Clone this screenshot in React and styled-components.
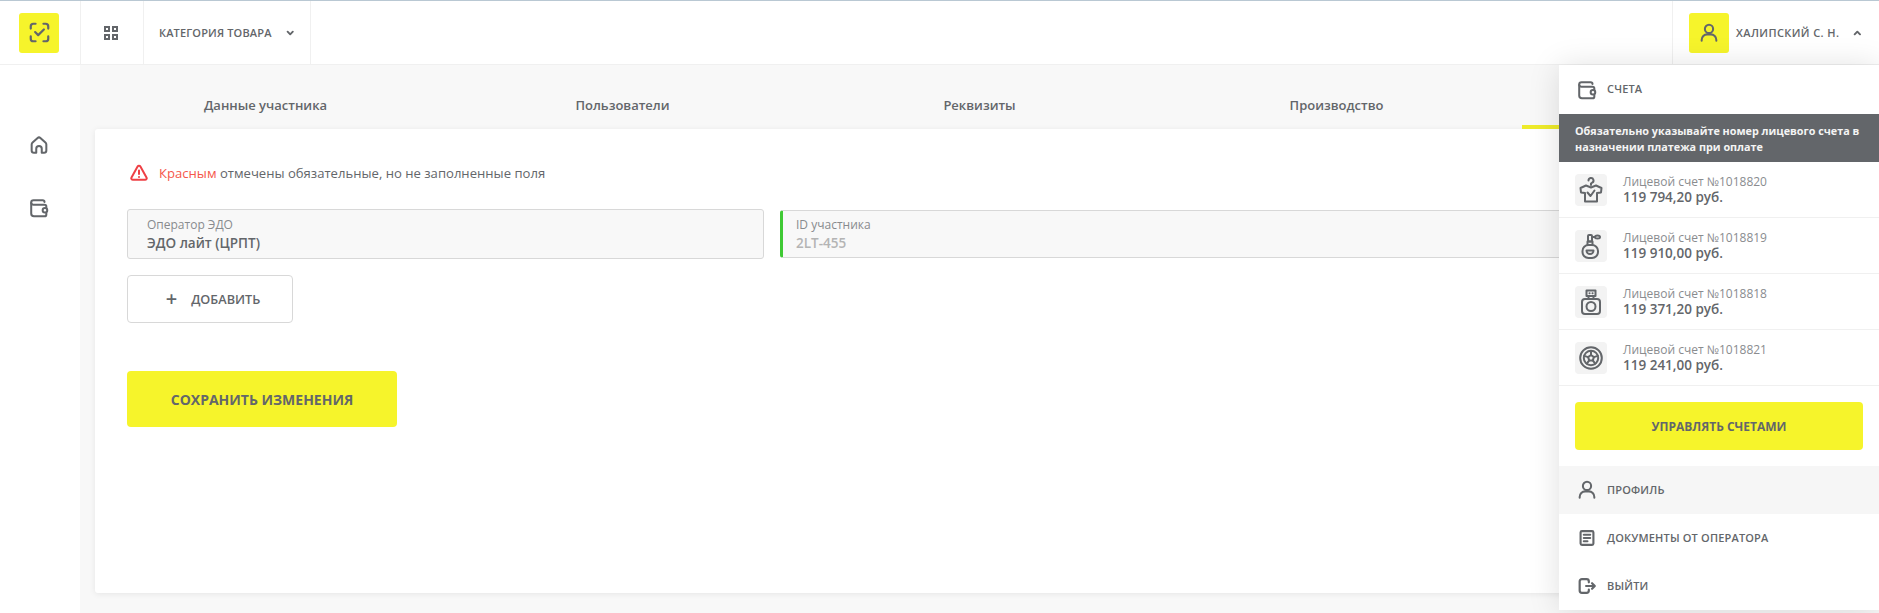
import React from 'react'
import styled, { createGlobalStyle } from 'styled-components'

const GREY = '#63666a'
const YELLOW = '#f6f42b'

const GlobalStyle = createGlobalStyle`
  html, body {
    margin: 0;
    padding: 0;
    height: 100%;
    overflow: hidden;
    background: #f8f8f8;
    font-family: 'Open Sans', 'Noto Sans', sans-serif;
    color: ${GREY};
  }
  * { box-sizing: border-box; }
`

const Svg = ({ size = 22, children, ...rest }) => (
  <svg
    width={size}
    height={size}
    viewBox="0 0 24 24"
    fill="none"
    stroke={GREY}
    strokeWidth="2.2"
    strokeLinecap="round"
    strokeLinejoin="round"
    {...rest}
  >
    {children}
  </svg>
)

const TileSvg = ({ children }) => (
  <Svg size={28} viewBox="0 0 28 28" strokeWidth="2">
    {children}
  </Svg>
)

const LogoIcon = () => (
  <Svg size={21} strokeWidth="2.5">
    <path d="M2 7.500V5a3 3 0 0 1 3-3h2.500M16.500 2H19a3 3 0 0 1 3 3v2.500M22 16.500V19a3 3 0 0 1-3 3h-2.500M7.500 22H5a3 3 0 0 1-3-3v-2.500" />
    <path d="M7 11.500l3.500 3.500L17 8.500" />
  </Svg>
)
const GridIcon = () => (
  <Svg size={16} viewBox="0 0 16 16" strokeWidth="2" strokeLinecap="square" strokeLinejoin="miter">
    <rect x="2" y="2" width="4" height="4" />
    <rect x="10" y="2" width="4" height="4" />
    <rect x="2" y="10" width="4" height="4" />
    <rect x="10" y="10" width="4" height="4" />
  </Svg>
)
const Chevron = ({ up }) => (
  <Svg size={12} viewBox="0 0 12 12" strokeWidth="2.2">
    <path d={up ? 'M3 7.500L6 4.500l3 3' : 'M3 4.500L6 7.500l3-3'} />
  </Svg>
)
const HomeIcon = () => (
  <Svg>
    <path d="M9 20.500H6.500a2.500 2.500 0 0 1-2.500-2.500v-6.500a3 3 0 0 1 1-2.200l5.500-5a2.300 2.300 0 0 1 3 0l5.500 5a3 3 0 0 1 1 2.200V18a2.500 2.500 0 0 1-2.500 2.500H15V16a3 3 0 0 0-6 0z" />
  </Svg>
)
const WalletIcon = () => (
  <Svg>
    <path d="M18 5.500V5.500a2 2 0 0 0-2-2H6a2.500 2.500 0 0 0-2.500 2.500V18A3 3 0 0 0 6.500 21H18a2 2 0 0 0 2-2v-1.500" />
    <path d="M3.500 6.500A2.500 2.500 0 0 0 6 8.500h12a2 2 0 0 1 2 2v1" />
    <circle cx="18.500" cy="14.500" r="2.500" />
  </Svg>
)
const UserIcon = () => (
  <Svg>
    <circle cx="12" cy="7.500" r="4.500" />
    <path d="M4 20.500v-1a6 6 0 0 1 6-6h4a6 6 0 0 1 6 6v1" />
  </Svg>
)
const DocIcon = () => (
  <Svg strokeWidth="2.300">
    <rect x="5" y="4.500" width="14" height="15" rx="1.500" />
    <path d="M8.500 8.500h7M8.500 12h7M8.500 15.500h4" />
  </Svg>
)
const ExitIcon = () => (
  <Svg strokeWidth="2.400">
    <path d="M14 8V7a2.500 2.500 0 0 0-2.500-2.500H6.500A2.500 2.500 0 0 0 4 7v10a2.500 2.500 0 0 0 2.500 2.500h5A2.500 2.500 0 0 0 14 17v-1" />
    <path d="M11 12h9M17.500 9l3 3-3 3" />
  </Svg>
)
const WarnIcon = () => (
  <Svg size={18} viewBox="0 0 18 18" stroke="#ee4045" strokeWidth="2">
    <path d="M7.600 2.600L1.500 13.400A1.600 1.600 0 0 0 2.900 15.800h12.200a1.600 1.600 0 0 0 1.400-2.400L10.400 2.600a1.600 1.600 0 0 0-2.800 0z" />
    <path d="M9 6.500v3.500M9 13v.1" />
  </Svg>
)
const ShirtIcon = () => (
  <TileSvg>
    <path d="M11.500 4.500a2.500 2.500 0 1 1 3.600 2.200L14 7.500V9" />
    <path d="M9 9.500L3.500 12l.5 4.500 4 .5v8.500h12V17l4-.5.5-4.500L19 9.500l-5 2z" />
    <path d="M10.500 16.500l3 3.500 4-5.500" />
  </TileSvg>
)
const SprayIcon = () => (
  <TileSvg>
    <rect x="11" y="3" width="4" height="6.500" rx="1" />
    <path d="M15 5h3" />
    <ellipse cx="20.500" cy="5" rx="2.500" ry="1.500" />
    <path d="M10.500 13V9.500h5V13" />
    <rect x="5.500" y="13" width="15.500" height="13" rx="6" />
    <path d="M9.500 18.500h7a3.500 3.500 0 0 1-7 0z" />
  </TileSvg>
)
const PerfumeIcon = () => (
  <TileSvg>
    <rect x="9.500" y="2.500" width="9" height="5.500" />
    <path d="M12.500 5.200h.1M15.500 5.200h.1M11.500 8v3M16.500 8v3" />
    <rect x="5" y="11" width="18" height="15" rx="3" />
    <circle cx="14" cy="18.500" r="4.500" />
  </TileSvg>
)
const WheelIcon = () => (
  <TileSvg>
    <circle cx="14" cy="14" r="10.800" />
    <circle cx="14" cy="14" r="7.200" />
    <path d="M14 7v4M20.800 11.900l-3.900 1.200M18.200 19.700l-2.400-3.300M9.800 19.700l2.400-3.300M7.200 11.900l3.900 1.200" />
    <path d="M14 11l2.900 2.100-1.100 3.300h-3.600l-1.100-3.300z" />
  </TileSvg>
)

const Page = styled.div`
  height: 613px;
  display: flex;
  flex-direction: column;
  border-top: 1px solid #b9c8d3;
  position: relative;
  overflow: hidden;
`
const Header = styled.header`
  height: 64px;
  flex-shrink: 0;
  display: flex;
  background: #fff;
  border-bottom: 1px solid #f0f0f0;
`
const LogoCell = styled.div`
  width: 80px;
  display: flex;
  align-items: center;
  justify-content: center;
  padding-right: 2px;
`
const YellowBox = styled.div`
  width: 40px;
  height: 40px;
  flex-shrink: 0;
  border-radius: 3px;
  background: ${YELLOW};
  display: flex;
  align-items: center;
  justify-content: center;
`
const HeaderCell = styled.div`
  display: flex;
  align-items: center;
  border-left: 1px solid #f0f0f0;
  border-right: ${(p) => (p.$closed ? '1px solid #f0f0f0' : 'none')};
  padding: 0 ${(p) => p.$pad || 15}px;
  gap: ${(p) => p.$gap || 0}px;
  margin-left: ${(p) => (p.$push ? 'auto' : 0)};
  width: ${(p) => p.$width || 'auto'};
`
const HeaderText = styled.span`
  font-size: 11px;
  font-weight: 600;
  letter-spacing: ${(p) => (p.$wide ? 0.4 : 0.15)}px;
  white-space: nowrap;
  margin-right: ${(p) => p.$after || 0}px;
`
const Body = styled.div`
  flex: 1;
  display: flex;
  min-height: 0;
`
const Sidebar = styled.nav`
  width: 80px;
  flex-shrink: 0;
  background: #fff;
  padding: 69px 2px 0 0;
  display: flex;
  flex-direction: column;
  align-items: center;
  gap: 41px;
`
const Main = styled.main`
  flex: 1;
  min-width: 0;
  padding: 0 15px;
`
const Tabs = styled.div`
  display: flex;
  height: 64px;
  margin: 0 -8px;
`
const Tab = styled.div`
  flex: 1;
  position: relative;
  display: flex;
  align-items: center;
  justify-content: center;
  padding-top: 16px;
  font-size: 13px;
  font-weight: 600;
  &::after {
    content: '';
    display: ${(p) => (p.$active ? 'block' : 'none')};
    position: absolute;
    left: 7px;
    right: 7px;
    bottom: 0;
    height: 4px;
    background: #eeeb2a;
  }
`
const Card = styled.section`
  height: 464px;
  background: #fff;
  border-radius: 3px;
  box-shadow: 0 1px 6px rgba(0, 0, 0, 0.08);
  padding: 34px 32px;
`
const Notice = styled.div`
  display: flex;
  align-items: center;
  gap: 11px;
  padding-left: 3px;
  height: 20px;
  font-size: 13.100px;
`
const Red = styled.span`
  color: #f5574a;
`
const Fields = styled.div`
  display: flex;
  align-items: center;
  gap: 16px;
  margin-top: 26px;
`
const Field = styled.div`
  flex: ${(p) => (p.$valid ? 1 : '0 0 637px')};
  height: ${(p) => (p.$valid ? 48 : 50)}px;
  background: #f8f8f8;
  border: 1px solid #d8d8d8;
  border-left: ${(p) => (p.$valid ? '3px solid #3fc934' : '1px solid #d8d8d8')};
  border-radius: 3px;
  padding: ${(p) => (p.$valid ? 6 : 7)}px 0 0 ${(p) => (p.$valid ? 13 : 19)}px;
`
const FieldLabel = styled.div`
  font-size: 12px;
  line-height: 16px;
  color: #888b8e;
`
const FieldValue = styled.div`
  font-size: 13.500px;
  line-height: 20px;
  font-weight: 600;
  color: ${(p) => (p.$muted ? '#b4b4b4' : GREY)};
`
const AddButton = styled.button`
  margin-top: 16px;
  width: 166px;
  height: 48px;
  border: 1px solid #d8d8d8;
  border-radius: 4px;
  background: #fff;
  display: flex;
  align-items: center;
  justify-content: center;
  gap: 14px;
  padding: 0 0 0 6px;
  font: 600 12.700px 'Open Sans', sans-serif;
  color: ${GREY};
`
const PlusMark = styled.span`
  font-size: 20px;
  font-weight: 600;
  line-height: 1;
`
const SaveButton = styled.button`
  margin-top: 48px;
  width: 270px;
  height: 56px;
  border: none;
  border-radius: 4px;
  background: ${YELLOW};
  font: 700 14px 'Open Sans', sans-serif;
  color: ${GREY};
`
const Panel = styled.aside`
  position: absolute;
  top: 64px;
  right: 0;
  width: 320px;
  height: 545px;
  background: #fff;
  border-radius: 0 0 6px 6px;
  box-shadow: 0 2px 32px rgba(0, 0, 0, 0.13);
`
const MenuRow = styled.div`
  height: ${(p) => (p.$first ? 49 : 48)}px;
  display: flex;
  align-items: center;
  gap: 9px;
  padding-left: 17px;
  background: ${(p) => (p.$active ? '#f6f6f6' : '#fff')};
`
const MenuLabel = styled.span`
  font-size: 11px;
  font-weight: 600;
  letter-spacing: 0.18px;
  margin-bottom: 2px;
`
const Banner = styled.div`
  height: 48px;
  background: ${GREY};
  color: #f4f4f4;
  padding: 9px 0 0 16px;
  font-size: 10.800px;
  line-height: 16px;
  font-weight: 700;
`
const AccountRow = styled.div`
  height: 56px;
  display: flex;
  align-items: center;
  gap: 16px;
  padding-left: 16px;
  border-bottom: 1px solid #f0f0f0;
`
const Tile = styled.div`
  width: 32px;
  height: 32px;
  background: #f3f3f3;
  border-radius: 4px;
  display: flex;
  align-items: center;
  justify-content: center;
`
const AccountLabel = styled.div`
  font-size: 12px;
  line-height: 15px;
  color: #8a8c8f;
`
const AccountSum = styled.div`
  font-size: 13.500px;
  line-height: 16px;
  font-weight: 600;
`
const ManageWrap = styled.div`
  padding: 16px;
`
const ManageButton = styled.button`
  width: 100%;
  height: 48px;
  border: none;
  border-radius: 4px;
  background: ${YELLOW};
  font: 700 12px 'Open Sans', sans-serif;
  color: ${GREY};
`

const tabs = ['Данные участника', 'Пользователи', 'Реквизиты', 'Производство', '']
const accounts = [
  { id: '1018820', sum: '119 794,20 руб.', Icon: ShirtIcon },
  { id: '1018819', sum: '119 910,00 руб.', Icon: SprayIcon },
  { id: '1018818', sum: '119 371,20 руб.', Icon: PerfumeIcon },
  { id: '1018821', sum: '119 241,00 руб.', Icon: WheelIcon },
]

const App = () => {
  return (
    <Page>
      <GlobalStyle />
      <Header>
        <LogoCell>
          <YellowBox>
            <LogoIcon />
          </YellowBox>
        </LogoCell>
        <HeaderCell $width="63px" $pad={22}>
          <GridIcon />
        </HeaderCell>
        <HeaderCell $gap={13} $width="168px" $closed>
          <HeaderText>КАТЕГОРИЯ ТОВАРА</HeaderText>
          <Chevron />
        </HeaderCell>
        <HeaderCell $push $width="207px" $pad={16} $gap={7}>
          <YellowBox>
            <UserIcon />
          </YellowBox>
          <HeaderText $wide $after={6}>ХАЛИПСКИЙ С. Н.</HeaderText>
          <Chevron up />
        </HeaderCell>
      </Header>
      <Body>
        <Sidebar>
          <HomeIcon />
          <WalletIcon />
        </Sidebar>
        <Main>
          <Tabs>
            {tabs.map((t, i) => (
              <Tab key={i} $active={i === 4}>
                {t}
              </Tab>
            ))}
          </Tabs>
          <Card>
            <Notice>
              <WarnIcon />
              <span>
                <Red>Красным</Red> отмечены обязательные, но не заполненные поля
              </span>
            </Notice>
            <Fields>
              <Field>
                <FieldLabel>Оператор ЭДО</FieldLabel>
                <FieldValue>ЭДО лайт (ЦРПТ)</FieldValue>
              </Field>
              <Field $valid>
                <FieldLabel>ID участника</FieldLabel>
                <FieldValue $muted>2LT-455</FieldValue>
              </Field>
            </Fields>
            <AddButton>
              <PlusMark>+</PlusMark>
              ДОБАВИТЬ
            </AddButton>
            <SaveButton>СОХРАНИТЬ ИЗМЕНЕНИЯ</SaveButton>
          </Card>
        </Main>
      </Body>
      <Panel>
        <MenuRow $first>
          <WalletIcon />
          <MenuLabel>СЧЕТА</MenuLabel>
        </MenuRow>
        <Banner>
          Обязательно указывайте номер лицевого счета в назначении платежа при оплате
        </Banner>
        {accounts.map(({ id, sum, Icon }) => (
          <AccountRow key={id}>
            <Tile>
              <Icon />
            </Tile>
            <div>
              <AccountLabel>Лицевой счет №{id}</AccountLabel>
              <AccountSum>{sum}</AccountSum>
            </div>
          </AccountRow>
        ))}
        <ManageWrap>
          <ManageButton>УПРАВЛЯТЬ СЧЕТАМИ</ManageButton>
        </ManageWrap>
        <MenuRow $active>
          <UserIcon />
          <MenuLabel>ПРОФИЛЬ</MenuLabel>
        </MenuRow>
        <MenuRow>
          <DocIcon />
          <MenuLabel>ДОКУМЕНТЫ ОТ ОПЕРАТОРА</MenuLabel>
        </MenuRow>
        <MenuRow>
          <ExitIcon />
          <MenuLabel>ВЫЙТИ</MenuLabel>
        </MenuRow>
      </Panel>
    </Page>
  )
}

export default App
